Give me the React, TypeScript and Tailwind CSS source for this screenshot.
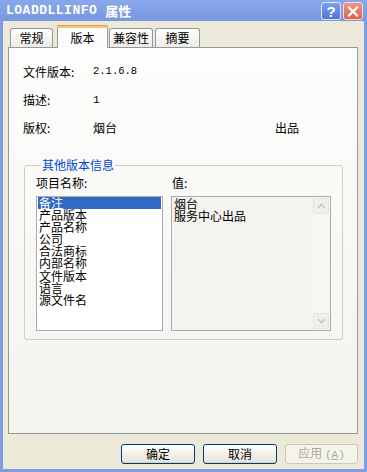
import React from "react";

const leftItems = ["备注", "产品版本", "产品名称", "公司", "合法商标", "内部名称", "文件版本", "语言", "源文件名"];

function Tab({ label, selected, w }: { label: string; selected?: boolean; w: string }) {
  if (selected) {
    return (
      <div className={`${w} relative z-10 -mb-px h-[23px] rounded-t-[3px] border-x border-t border-[#919b9c] bg-[#fcfcfe] flex justify-center pt-[3px]`}>
        <div className="absolute left-[-1px] right-[-1px] top-[-1px] h-[3px] rounded-t-[3px] bg-[#f8c87a] border-t border-[#e69c3c]" />
        <span className="text-[12px] leading-[16px] mt-[1px]">{label}</span>
      </div>
    );
  }
  return (
    <div className={`${w} h-[19px] rounded-t-[3px] border-x border-t border-[#919b9c] bg-gradient-to-b from-white to-[#ecebe5] flex items-center justify-center`}>
      <span className="text-[12px] leading-[14px]">{label}</span>
    </div>
  );
}

function Btn({ label, disabled }: { label: React.ReactNode; disabled?: boolean }) {
  return (
    <div
      className={
        disabled
          ? "w-[73px] h-[20px] rounded-[3px] border border-[#c9c7ba] bg-[#f5f4ea] flex items-center justify-center text-[12px] text-[#aca899]"
          : "w-[74px] h-[20px] rounded-[3px] border border-[#003c74] bg-gradient-to-b from-white to-[#e6e3d6] flex items-center justify-center text-[12px] text-black shadow-[inset_0_-1px_0_#d6d0c5]"
      }
    >
      {label}
    </div>
  );
}

export default function App() {
  return (
    <div className="w-[367px] h-[472px] bg-[#7c9ce4] flex flex-col font-['Noto_Sans_CJK_SC','Noto_Sans',sans-serif] text-black overflow-hidden">
      {/* title bar */}
      <div className="h-[21px] flex items-start justify-between bg-gradient-to-b from-[#8aa7ea] to-[#7797e2]">
        <div className="pl-[6px] pt-[3px] flex items-center text-white font-bold text-[13px] leading-[15px]">
          <span className="font-['Liberation_Mono',monospace] tracking-[0.5px]">LOADDLLINFO</span>
          <span className="ml-[8px] text-[13px] font-['Noto_Sans_CJK_SC',sans-serif]">属性</span>
        </div>
        <div className="flex gap-[2px] pt-[2px] pr-[4px]">
          <div className="w-[20px] h-[18px] rounded-[3px] border border-[#dfe6f8] bg-gradient-to-b from-[#7d9ff0] to-[#4f74d8] flex items-center justify-center text-white font-bold text-[15px] leading-none font-['Liberation_Sans',sans-serif]">
            ?
          </div>
          <div className="w-[20px] h-[18px] rounded-[3px] border border-[#f2dcd6] bg-gradient-to-b from-[#ec9684] to-[#d8644f] flex items-center justify-center">
            <svg width="12" height="11" viewBox="0 0 12 11">
              <path d="M2 1.5 L10 9.5 M10 1.5 L2 9.5" stroke="white" strokeWidth="2.2" strokeLinecap="square" />
            </svg>
          </div>
        </div>
      </div>

      {/* body */}
      <div className="flex-1 mx-[3px] mb-[3px] bg-[#ece9d8] flex flex-col pl-[5px] pr-[6px] pt-[4px]">
        {/* tabs */}
        <div className="h-[22px] flex items-end pl-[2px]">
          <Tab label="常规" w="w-[43px]" />
          <div className="w-[4px]" />
          <Tab label="版本" w="w-[51px]" selected />
          <div className="w-[1px]" />
          <Tab label="兼容性" w="w-[44px]" />
          <div className="w-[2px]" />
          <Tab label="摘要" w="w-[45px]" />
        </div>

        {/* panel */}
        <div className="h-[387px] border border-[#919b9c] bg-gradient-to-b from-[#fdfdfc] to-[#f5f3ee] flex flex-col pt-[10px] pl-[14px] pr-[14px]">
          <div className="h-[28px] flex items-center text-[12px]">
            <span className="w-[70px]">文件版本:</span>
            <span className="font-['Liberation_Mono',monospace] text-[10.5px]">2.1.6.8</span>
          </div>
          <div className="h-[28px] flex items-center text-[12px]">
            <span className="w-[70px]">描述:</span>
            <span className="font-['Liberation_Mono',monospace] text-[11px]">1</span>
          </div>
          <div className="h-[28px] flex items-center text-[12px]">
            <span className="w-[70px]">版权:</span>
            <span className="w-[182px]">烟台</span>
            <span>出品</span>
          </div>

          <fieldset className="mt-[16px] ml-[1px] border border-[#d0d0bf] rounded-[3px] pl-[11px] pr-[11px] pb-[8px]">
            <legend className="ml-[5px] px-[1px] text-[12px] leading-[14px] text-[#0046d5]">其他版本信息</legend>
            <div className="grid grid-cols-[127px_160px] gap-x-[8px]">
              <div className="h-[16px] mt-[3px] mb-[5px] flex items-center text-[12px]">项目名称:</div>
              <div className="h-[16px] mt-[3px] mb-[5px] flex items-center text-[12px] pl-[1px]">值:</div>
              <div className="h-[135px] border border-[#a5acb5] bg-white p-[0_1px] text-[12px] leading-[12px]">
                {leftItems.map((it, i) => (
                  <div key={it} className={i === 0 ? "h-[12.1px] bg-[#316ac5] text-white pl-[1px]" : "h-[12.1px] pl-[1px]"}>
                    {it}
                  </div>
                ))}
              </div>
              <div className="h-[135px] border border-[#a5acb5] bg-[#f4f3ee] flex">
                <div className="flex-1 pl-[2px] pt-[1px] text-[12px] leading-[12px]">
                  <div className="h-[12px]">烟台</div>
                  <div className="h-[12px]">服务中心出品</div>
                </div>
                <div className="w-[17px] bg-[#f7f6f1] flex flex-col justify-between py-[1px] pr-[1px]">
                  <div className="w-[16px] h-[16px] rounded-[2px] border border-[#e6e4da] bg-[#f1efe7] flex items-center justify-center">
                    <svg width="9" height="6" viewBox="0 0 9 6">
                      <path d="M1 5 L4.5 1.5 L8 5" stroke="#c9c7bd" strokeWidth="1.6" fill="none" />
                    </svg>
                  </div>
                  <div className="w-[16px] h-[16px] rounded-[2px] border border-[#e6e4da] bg-[#f1efe7] flex items-center justify-center">
                    <svg width="9" height="6" viewBox="0 0 9 6">
                      <path d="M1 1 L4.5 4.5 L8 1" stroke="#c9c7bd" strokeWidth="1.6" fill="none" />
                    </svg>
                  </div>
                </div>
              </div>
            </div>
          </fieldset>
        </div>

        {/* buttons */}
        <div className="mt-[10px] h-[20px] flex justify-end gap-[8px]">
          <Btn label="确定" />
          <Btn label="取消" />
          <Btn
            disabled
            label={
              <span>
                应用 <span className="font-['Liberation_Mono',monospace] text-[11px]">(<u>A</u>)</span>
              </span>
            }
          />
        </div>
      </div>
    </div>
  );
}
